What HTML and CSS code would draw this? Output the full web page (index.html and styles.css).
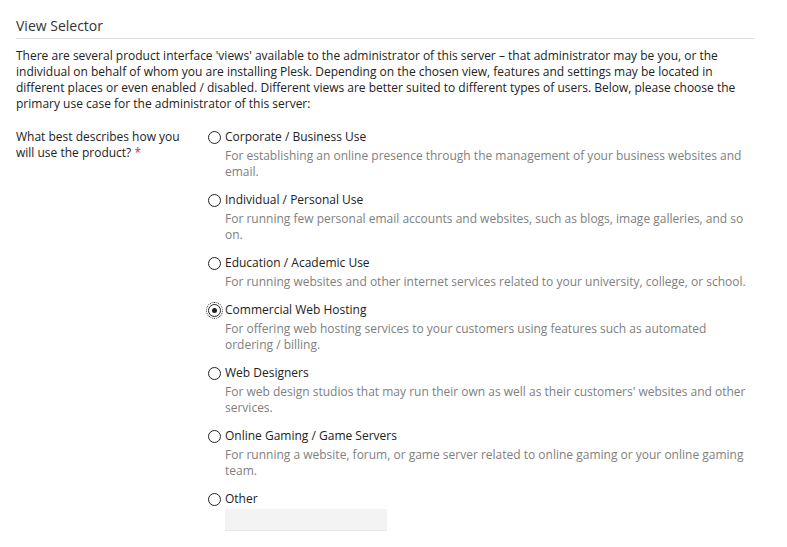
FILE: index.html
```html
<!DOCTYPE html>
<html>
<head>
<meta charset="utf-8">
<link rel="stylesheet" href="styles.css">
</head>
<body>
<div class="page">
  <h2 class="title">View Selector</h2>
  <p class="intro">There are several product interface 'views' available to the administrator of this server – that administrator may be you, or the individual on behalf of whom you are installing Plesk. Depending on the chosen view, features and settings may be located in different places or even enabled / disabled. Different views are better suited to different types of users. Below, please choose the primary use case for the administrator of this server:</p>
  <div class="form-row">
    <div class="field-label">What best describes how you will use the product?&nbsp;<span class="req">*</span></div>
    <div class="options">
      <div class="option">
        <div class="opt-head"><span class="radio"></span><span class="opt-name">Corporate / Business Use</span></div>
        <div class="opt-desc">For establishing an online presence through the management of your business websites and email.</div>
      </div>
      <div class="option">
        <div class="opt-head"><span class="radio"></span><span class="opt-name">Individual / Personal Use</span></div>
        <div class="opt-desc">For running few personal email accounts and websites, such as blogs, image galleries, and so on.</div>
      </div>
      <div class="option">
        <div class="opt-head"><span class="radio"></span><span class="opt-name">Education / Academic Use</span></div>
        <div class="opt-desc">For running websites and other internet services related to your university, college, or school.</div>
      </div>
      <div class="option">
        <div class="opt-head"><span class="radio checked"></span><span class="opt-name">Commercial Web Hosting</span></div>
        <div class="opt-desc">For offering web hosting services to your customers using features such as automated ordering / billing.</div>
      </div>
      <div class="option">
        <div class="opt-head"><span class="radio"></span><span class="opt-name">Web Designers</span></div>
        <div class="opt-desc">For web design studios that may run their own as well as their customers' websites and other services.</div>
      </div>
      <div class="option">
        <div class="opt-head"><span class="radio"></span><span class="opt-name">Online Gaming / Game Servers</span></div>
        <div class="opt-desc">For running a website, forum, or game server related to online gaming or your online gaming team.</div>
      </div>
      <div class="option">
        <div class="opt-head"><span class="radio"></span><span class="opt-name">Other</span></div>
        <div class="other-input"></div>
      </div>
    </div>
  </div>
</div>
</body>
</html>
```
FILE: styles.css
```css
html, body {
  margin: 0;
  padding: 0;
  background: #fff;
}
body {
  font-family: "Open Sans", "DejaVu Sans", sans-serif;
  font-size: 12px;
  line-height: 16px;
  color: #222;
}
.page {
  width: 738px;
  padding: 16px 0 0 16px;
}
.title {
  margin: 0;
  font-size: 14px;
  font-weight: 400;
  line-height: 20px;
  color: #333;
  padding-bottom: 2px;
  border-bottom: 1px solid #ddd;
}
.intro {
  margin: 9px 0 0 0;
  color: #222;
}
.form-row {
  display: grid;
  grid-template-columns: 192px 1fr;
  margin-top: 17px;
}
.field-label {
  color: #222;
  padding-right: 14px;
}
.req {
  color: #d02b3c;
}
.options {
  display: flex;
  flex-direction: column;
  gap: 12px;
}
.opt-head {
  display: flex;
  align-items: center;
  gap: 4px;
  color: #222;
}
.radio {
  box-sizing: border-box;
  width: 13px;
  height: 13px;
  border: 1px solid #222;
  border-radius: 50%;
  position: relative;
  flex: none;
}
.radio.checked {
  outline: 1px dotted #222;
  outline-offset: 1px;
}
.radio.checked::after {
  content: "";
  position: absolute;
  left: 3px;
  top: 3px;
  width: 5px;
  height: 5px;
  border-radius: 50%;
  background: #222;
}
.opt-desc {
  margin: 3px 0 0 17px;
  color: #808080;
  max-width: 528px;
}
.other-input {
  margin: 2px 0 0 17px;
  width: 162px;
  height: 22px;
  background: #f3f3f3;
  border-bottom: 1px solid #e6e6e6;
  box-sizing: border-box;
}
```
